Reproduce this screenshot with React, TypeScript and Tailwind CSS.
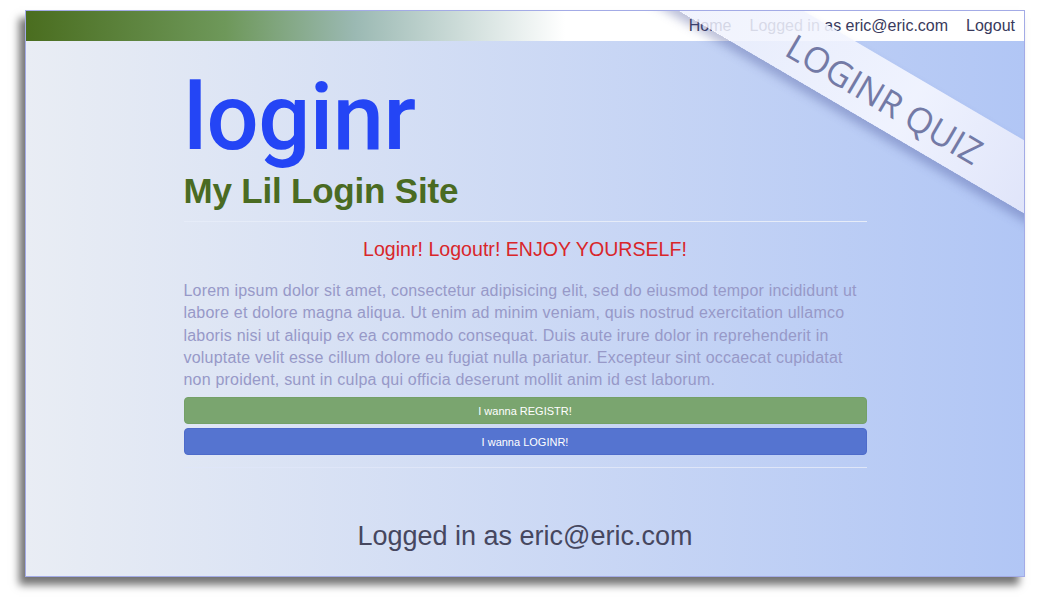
import React from "react";

const lorem =
  "Lorem ipsum dolor sit amet, consectetur adipisicing elit, sed do eiusmod tempor incididunt ut labore et dolore magna aliqua. Ut enim ad minim veniam, quis nostrud exercitation ullamco laboris nisi ut aliquip ex ea commodo consequat. Duis aute irure dolor in reprehenderit in voluptate velit esse cillum dolore eu fugiat nulla pariatur. Excepteur sint occaecat cupidatat non proident, sunt in culpa qui officia deserunt mollit anim id est laborum.";

function NavBar() {
  return (
    <div className="h-[30px] flex items-center justify-end gap-[18px] pr-[9px] text-[16px] text-[#393a5c] bg-[linear-gradient(to_right,#4a6d1f_0%,#6e985a_20%,#9bb9b3_33%,#ffffff_54%,#ffffff_100%)]">
      <a className="cursor-pointer">Home</a>
      <span>Logged in as eric@eric.com</span>
      <a className="cursor-pointer">Logout</a>
    </div>
  );
}

function Ribbon() {
  return (
    <div className="absolute left-[556px] top-[51px] w-[600px] h-[63px] rotate-[30.4deg] flex items-center justify-center bg-[linear-gradient(to_right,rgba(236,239,252,0.8)_0%,rgba(244,246,255,0.92)_55%,rgba(214,219,246,0.95)_100%)] shadow-[0_7px_10px_rgba(70,80,150,0.35)]">
      <span className="pl-[10px] pt-[8px] text-[35px] text-[#737aa6] [font-family:'Open_Sans',sans-serif]">
        LOGINR QUIZ
      </span>
    </div>
  );
}

export default function App() {
  return (
    <div className="w-[1050px] h-[602px] bg-white pl-[25px] pt-[10px] [font-family:'Liberation_Sans',Arial,sans-serif]">
      <div className="relative w-[1000px] h-[567px] overflow-hidden border border-[#a3abe6] shadow-[-6px_8px_8px_rgba(0,0,0,0.55)] bg-[linear-gradient(to_right,#e9edf4,#b1c6f5)]">
        <NavBar />
        <div className="w-[683px] mx-auto">
          <h1 className="mt-[31px] text-[92px] leading-none font-medium text-[#2445f5] tracking-[-0.5px] [font-family:Roboto,'Liberation_Sans',sans-serif]">
            loginr
          </h1>
          <h2 className="mt-[8px] text-[35px] leading-[38px] font-bold text-[#4a6b22] tracking-[-0.2px]">My Lil Login Site</h2>
          <hr className="mt-[11px] border-t border-[#e6ecf8]" />
          <p className="mt-[13px] text-center text-[19.6px] leading-[28px] text-[#d9262a]">
            Loginr! Logoutr! ENJOY YOURSELF!
          </p>
          <p className="mt-[17px] text-[16px] leading-[22.3px] tracking-[0.2px] text-[#9799c8]">{lorem}</p>
          <button className="mt-[6px] w-full h-[27px] rounded-[4px] bg-[#7aa56f] border border-[#74a068] text-white text-[11px]">
            I wanna REGISTR!
          </button>
          <button className="mt-[4px] w-full h-[27px] rounded-[4px] bg-[#5574d0] border border-[#4d6bca] text-white text-[11px]">
            I wanna LOGINR!
          </button>
          <hr className="mt-[12px] border-t border-[#dfe6f8]" />
          <p className="mt-[48px] text-center text-[27px] text-[#46475f]">Logged in as eric@eric.com</p>
        </div>
        <Ribbon />
      </div>
    </div>
  );
}
